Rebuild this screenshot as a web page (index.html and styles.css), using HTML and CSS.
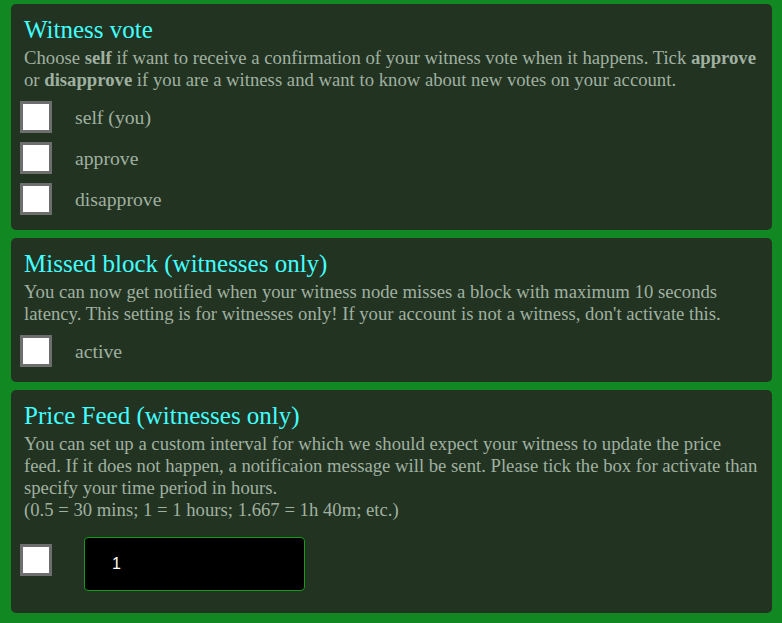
FILE: index.html
```html
<!DOCTYPE html>
<html>
<head>
<meta charset="utf-8">
<link rel="stylesheet" href="styles.css">
</head>
<body>
<div class="page">
  <section class="card">
    <h2 class="card-title">Witness vote</h2>
    <p class="card-text">Choose <b>self</b> if want to receive a confirmation of your witness vote when it happens. Tick <b>approve</b> or <b>disapprove</b> if you are a witness and want to know about new votes on your account.</p>
    <div class="options">
      <label class="option"><input type="checkbox" class="box"><span>self (you)</span></label>
      <label class="option"><input type="checkbox" class="box"><span>approve</span></label>
      <label class="option"><input type="checkbox" class="box"><span>disapprove</span></label>
    </div>
  </section>
  <section class="card">
    <h2 class="card-title">Missed block (witnesses only)</h2>
    <p class="card-text">You can now get notified when your witness node misses a block with maximum 10 seconds latency. This setting is for witnesses only! If your account is not a witness, don't activate this.</p>
    <div class="options">
      <label class="option"><input type="checkbox" class="box"><span>active</span></label>
    </div>
  </section>
  <section class="card card-last">
    <h2 class="card-title">Price Feed (witnesses only)</h2>
    <p class="card-text">You can set up a custom interval for which we should expect your witness to update the price feed. If it does not happen, a notificaion message will be sent. Please tick the box for activate than specify your time period in hours.<br>(0.5 = 30 mins; 1 = 1 hours; 1.667 = 1h 40m; etc.)</p>
    <div class="feed-row">
      <input type="checkbox" class="box feed-box">
      <input type="text" class="feed-input" value="1">
    </div>
  </section>
</div>
</body>
</html>
```

FILE: styles.css
```css
html, body {
  margin: 0;
  padding: 0;
  background: #118822;
}
body {
  font-family: "Liberation Serif", "Times New Roman", serif;
  color: #a0b0a0;
}
.page {
  display: flex;
  flex-direction: column;
  gap: 8px;
  padding: 4px 10px 0 11px;
}
.card {
  background: #223322;
  border-radius: 5px;
  padding: 11px 13px 15px 13px;
}
.card-title {
  margin: 0 0 2px 0;
  font-weight: normal;
  font-size: 25px;
  line-height: 30px;
  color: #44ffff;
}
.card-text {
  margin: 0;
  font-size: 18.7px;
  line-height: 22px;
}
.card-text b {
  font-weight: bold;
}
.options {
  display: flex;
  flex-direction: column;
  gap: 9px;
  margin: 10px 0 0 -4px;
}
.option {
  display: flex;
  align-items: center;
  gap: 23px;
  font-size: 19.7px;
}
.box {
  appearance: none;
  -webkit-appearance: none;
  margin: 0;
  width: 32px;
  height: 32px;
  box-sizing: border-box;
  border: 3px solid #6e6e6e;
  background: #ffffff;
  flex: none;
}
.feed-row {
  display: flex;
  align-items: flex-start;
  gap: 32px;
  margin: 16px 0 7px -4px;
}
.feed-box {
  margin-top: 7px;
}
.feed-input {
  box-sizing: border-box;
  width: 221px;
  height: 54px;
  margin: 0;
  background: #000000;
  border: 1px solid #1a9a1a;
  border-radius: 4px;
  color: #ffffff;
  font-family: "Liberation Sans", Arial, sans-serif;
  font-size: 16px;
  padding: 0 0 0 27px;
  outline: none;
}
```
